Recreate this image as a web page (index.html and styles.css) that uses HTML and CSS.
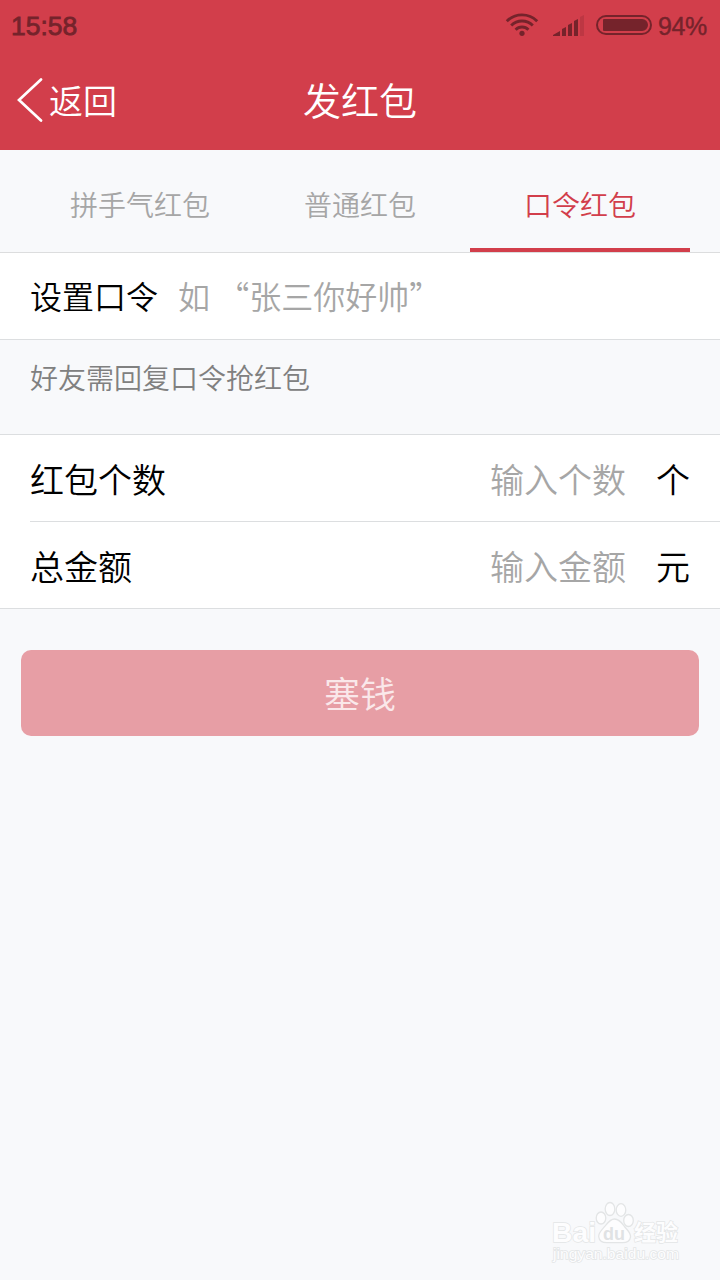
FILE: index.html
```html
<!DOCTYPE html>
<html lang="zh-CN">
<head>
    <meta charset="UTF-8">
    <meta name="viewport" content="width=device-width, initial-scale=1.0">
    <title>发红包</title>
    <link rel="stylesheet" href="styles.css">
</head>
<body>

<header>
    <div class="status-bar">
        <span class="time">15:58</span>
        <div class="status-icons">
            <svg class="wifi" width="34" height="24" viewBox="0 0 34 24">
                <g fill="none" stroke="#75232b" stroke-width="2.9">
                    <path d="M1.8 9.2a21.5 21.5 0 0 1 30.4 0"/>
                    <path d="M6.2 13.5a15.3 15.3 0 0 1 21.6 0"/>
                    <path d="M10.6 17.7a9 9 0 0 1 12.8 0"/>
                </g>
                <circle cx="17" cy="21.3" r="2.6" fill="#75232b"/>
            </svg>
            <svg class="signal" width="32" height="22" viewBox="0 0 32 22">
                <g fill="#75232b">
                    <path d="M0 22v-1l7-4v5z"/>
                    <path d="M9 22v-7l4-2v9z"/>
                    <path d="M15 22V11l4-2v13z"/>
                    <path d="M21 22V7l4-2v17z"/>
                </g>
                <path d="M27 22V3l4-2v21z" fill="#bd3743"/>
            </svg>
            <svg class="battery" width="56" height="20" viewBox="0 0 56 20">
                <rect x="1" y="1" width="54" height="18" rx="9" fill="none" stroke="#75232b" stroke-width="2"/>
                <path d="M8 4h38a6 6 0 0 1 0 12H8a1 1 0 0 1-1-1V5a1 1 0 0 1 1-1z" fill="#75232b"/>
            </svg>
            <span class="percent">94%</span>
        </div>
    </div>
    <nav class="title-bar">
        <a class="back">
            <svg width="26" height="44" viewBox="0 0 26 44">
                <path d="M24 1.5L2 22l22 20.5" fill="none" stroke="#fff" stroke-width="2.7" stroke-linecap="round"/>
            </svg>
            <span>返回</span>
        </a>
        <h1>发红包</h1>
    </nav>
</header>

<div class="tabs">
    <div class="tab">拼手气红包</div>
    <div class="tab">普通红包</div>
    <div class="tab active">口令红包</div>
</div>

<main>
    <div class="group password">
        <div class="row">
            <label for="password">设置口令</label>
            <input type="text" id="password" placeholder="如 “张三你好帅”">
        </div>
    </div>
    <p class="hint">好友需回复口令抢红包</p>
    <div class="group amount">
        <div class="row">
            <label for="count">红包个数</label>
            <input type="text" id="count" placeholder="输入个数">
            <span class="unit">个</span>
        </div>
        <div class="row">
            <label for="money">总金额</label>
            <input type="text" id="money" placeholder="输入金额">
            <span class="unit">元</span>
        </div>
    </div>
    <button class="submit" disabled>塞钱</button>
</main>

<svg class="watermark" width="136" height="66" viewBox="0 0 136 66">
    <g fill="#fdfdfe" stroke="#e3e5e6" stroke-width="1.3">
        <ellipse cx="51" cy="18" rx="4.8" ry="6"/>
        <ellipse cx="60" cy="9" rx="4.8" ry="6.5"/>
        <ellipse cx="71" cy="10" rx="4.8" ry="6.3"/>
        <ellipse cx="78.5" cy="20.5" rx="4.8" ry="6"/>
        <path d="M64.5 19c5 0 7.500 4 10 7.500 3 4 6.500 6.500 6 10.500-.6 5-5 5.700-8 5.700H57c-4 0-7.800-1.500-8.300-6-.4-4 3.300-7 6.300-10.500C57.600 23 60 19 64.500 19z"/>
    </g>
    <g class="mark">
        <text x="2" y="42" font-size="28" textLength="44" lengthAdjust="spacingAndGlyphs">Bai</text>
        <text class="du" x="53" y="40" font-size="19" textLength="22" lengthAdjust="spacingAndGlyphs">du</text>
        <text x="84" y="40" font-size="22" textLength="44" lengthAdjust="spacingAndGlyphs">经验</text>
    </g>
    <text class="site" x="3" y="59" font-size="14" textLength="126" lengthAdjust="spacingAndGlyphs">jingyan.baidu.com</text>
</svg>

</body>
</html>
```
FILE: styles.css
```css
* {
    box-sizing: border-box;
}
body {
    font-family: "Noto Sans CJK SC", sans-serif;
    font-weight: 350;
    margin: 0;
    height: 1280px;
    position: relative;
    overflow: hidden;
    background-color: #f8f9fb;
    color: #000;
}
header {
    height: 150px;
    background: #d23e4b;
    color: #fff;
}
.status-bar {
    display: flex;
    justify-content: space-between;
    height: 50px;
    padding: 0 12px 0 11px;
    font-family: "Liberation Sans", Arial, sans-serif;
    font-size: 26.5px;
    font-weight: 400;
    line-height: 52px;
    color: #75232b;
}
.time {
    -webkit-text-stroke: 0.8px #75232b;
}
.status-icons {
    display: flex;
    align-items: flex-start;
}
.wifi {
    margin: 12px 14px 0 0;
}
.signal {
    margin: 14px 11px 0 0;
}
.battery {
    margin: 15px 6px 0 0;
}
.percent {
    width: 50px;
    font-size: 25px;
    letter-spacing: -0.4px;
    -webkit-text-stroke: 0.4px #75232b;
}
.title-bar {
    display: grid;
    grid-template-columns: 1fr auto 1fr;
    align-items: center;
    height: 100px;
    padding: 0 17px;
}
.back {
    display: flex;
    align-items: center;
    gap: 6px;
    font-size: 34px;
    line-height: 44px;
}
h1 {
    margin: 0;
    padding-bottom: 3px;
    font-size: 38px;
    font-weight: 350;
    line-height: 50px;
}
.tabs {
    display: flex;
    height: 103px;
    padding: 0 30px;
    border-bottom: 1px solid #dcddde;
}
.tab {
    flex: 1;
    padding-top: 4px;
    border-bottom: 4px solid transparent;
    font-size: 28px;
    line-height: 100px;
    text-align: center;
    color: #a6a6a6;
}
.tab.active {
    border-bottom-color: #d23e4b;
    color: #d23e4b;
}
.group {
    background: #fff;
    border-bottom: 1px solid #dcdee0;
}
.row {
    display: flex;
    align-items: center;
    height: 86px;
    padding-right: 30px;
}
.password .row {
    padding-left: 30px;
    padding-bottom: 2px;
    font-size: 32px;
}
.amount {
    padding-left: 30px;
    border-top: 1px solid #dcdee0;
}
.amount .row {
    font-size: 34px;
}
.amount .row + .row {
    height: 87px;
    border-top: 1px solid #dcdee0;
}
input {
    flex: 1;
    min-width: 0;
    padding: 0;
    border: 0;
    outline: 0;
    background: none;
    font: inherit;
}
input::placeholder {
    color: #a6a6a6;
    opacity: 1;
}
.password input {
    margin-left: 20px;
}
.amount input {
    margin-right: 30px;
    text-align: right;
}
.hint {
    height: 94px;
    margin: 0;
    padding: 17px 30px;
    font-size: 28px;
    line-height: 40px;
    color: #808080;
}
.submit {
    display: block;
    width: 678px;
    height: 86px;
    margin: 41px auto 0;
    padding: 0 0 2px;
    border: 0;
    border-radius: 10px;
    background: #e79ea5;
    font-family: inherit;
    font-size: 36px;
    font-weight: 350;
    color: #fae8ea;
}
.watermark {
    position: absolute;
    left: 550px;
    top: 1200px;
}
.watermark text {
    font-family: "Liberation Sans", "Noto Sans CJK SC", sans-serif;
    fill: #fdfdfe;
    stroke: #e3e5e6;
    stroke-width: 1.4px;
    paint-order: stroke;
}
.mark text {
    font-weight: 700;
}
.watermark .du {
    fill: #e0e2e4;
    stroke: none;
}
```
